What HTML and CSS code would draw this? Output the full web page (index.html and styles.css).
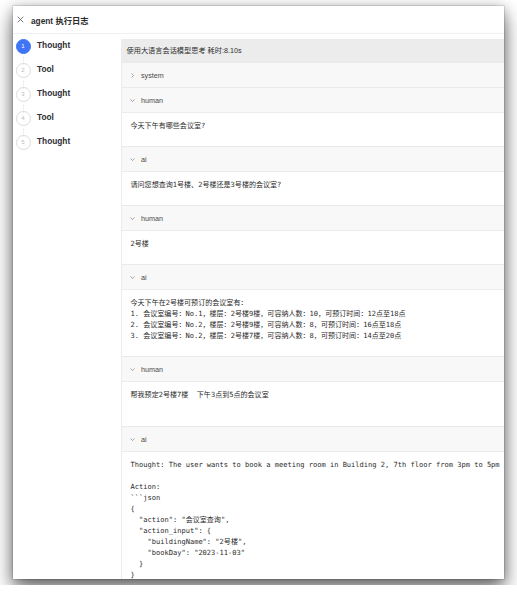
FILE: index.html
```html
<!DOCTYPE html>
<html lang="zh-CN">
<head>
<meta charset="utf-8">
<title>agent 执行日志</title>
<link rel="stylesheet" href="styles.css">
</head>
<body>
<div class="window">
  <header class="topbar">
    <svg class="close" viewBox="0 0 10 10" width="7" height="7"><path d="M1 1L9 9M9 1L1 9" stroke="#555" stroke-width="1.1" fill="none"/></svg>
    <span class="title">agent 执行日志</span>
  </header>
  <div class="main">
    <aside class="steps">
      <div class="step active"><div class="rail"><span class="dot">1</span><span class="line"></span></div><span class="label">Thought</span></div>
      <div class="step"><div class="rail"><span class="dot">2</span><span class="line"></span></div><span class="label">Tool</span></div>
      <div class="step"><div class="rail"><span class="dot">3</span><span class="line"></span></div><span class="label">Thought</span></div>
      <div class="step"><div class="rail"><span class="dot">4</span><span class="line"></span></div><span class="label">Tool</span></div>
      <div class="step last"><div class="rail"><span class="dot">5</span></div><span class="label">Thought</span></div>
    </aside>
    <section class="pane">
      <div class="pane-head">使用大语言会话模型思考 耗时:8.10s</div>
      <div class="msg">
        <div class="msg-head"><svg class="chev" viewBox="0 0 6 6" width="5" height="5"><path d="M1.8 0.6L4.2 3L1.8 5.4" stroke="#777" stroke-width="0.8" fill="none"/></svg><span>system</span></div>
      </div>
      <div class="msg">
        <div class="msg-head"><svg class="chev" viewBox="0 0 6 6" width="5" height="5"><path d="M0.6 1.8L3 4.2L5.4 1.8" stroke="#777" stroke-width="0.8" fill="none"/></svg><span>human</span></div>
        <pre class="msg-body">今天下午有哪些会议室?</pre>
      </div>
      <div class="msg">
        <div class="msg-head"><svg class="chev" viewBox="0 0 6 6" width="5" height="5"><path d="M0.6 1.8L3 4.2L5.4 1.8" stroke="#777" stroke-width="0.8" fill="none"/></svg><span>ai</span></div>
        <pre class="msg-body">请问您想查询1号楼、2号楼还是3号楼的会议室?</pre>
      </div>
      <div class="msg">
        <div class="msg-head"><svg class="chev" viewBox="0 0 6 6" width="5" height="5"><path d="M0.6 1.8L3 4.2L5.4 1.8" stroke="#777" stroke-width="0.8" fill="none"/></svg><span>human</span></div>
        <pre class="msg-body">2号楼</pre>
      </div>
      <div class="msg">
        <div class="msg-head"><svg class="chev" viewBox="0 0 6 6" width="5" height="5"><path d="M0.6 1.8L3 4.2L5.4 1.8" stroke="#777" stroke-width="0.8" fill="none"/></svg><span>ai</span></div>
        <pre class="msg-body">今天下午在2号楼可预订的会议室有：
1. 会议室编号：No.1，楼层：2号楼9楼，可容纳人数：10，可预订时间：12点至18点
2. 会议室编号：No.2，楼层：2号楼9楼，可容纳人数：8，可预订时间：16点至18点
3. 会议室编号：No.2，楼层：2号楼7楼，可容纳人数：8，可预订时间：14点至20点</pre>
      </div>
      <div class="msg">
        <div class="msg-head"><svg class="chev" viewBox="0 0 6 6" width="5" height="5"><path d="M0.6 1.8L3 4.2L5.4 1.8" stroke="#777" stroke-width="0.8" fill="none"/></svg><span>human</span></div>
        <pre class="msg-body">帮我预定2号楼7楼  下午3点到5点的会议室
&nbsp;</pre>
      </div>
      <div class="msg">
        <div class="msg-head"><svg class="chev" viewBox="0 0 6 6" width="5" height="5"><path d="M0.6 1.8L3 4.2L5.4 1.8" stroke="#777" stroke-width="0.8" fill="none"/></svg><span>ai</span></div>
        <pre class="msg-body">Thought: The user wants to book a meeting room in Building 2, 7th floor from 3pm to 5pm

Action:
```json
{
  "action": "会议室查询",
  "action_input": {
    "buildingName": "2号楼",
    "bookDay": "2023-11-03"
  }
}
```
</pre>
      </div>
      <div class="scroll-thumb"></div>
    </section>
  </div>
</div>
</body>
</html>
```
FILE: styles.css
```css
* { box-sizing: border-box; }

html {
  margin: 0;
  background: #ffffff;
}

body {
  margin: 0;
  padding: 6px 13px;
  font-family: "Liberation Sans", "Noto Sans CJK SC", sans-serif;
  color: #333;
}

.window {
  width: 491px;
  height: 573px;
  background: #fff;
  display: flex;
  flex-direction: column;
  overflow: hidden;
  box-shadow: 0 0 0 0.5px rgba(0,0,0,0.2), 0 10px 20px rgba(0,0,0,0.55), 0 2px 10px rgba(0,0,0,0.25);
}

.topbar {
  height: 27px;
  flex: none;
  display: flex;
  align-items: center;
  padding-left: 4px;
  border-bottom: 1px solid #f0f0f0;
}

.close {
  display: block;
  margin-right: 7px;
}

.title {
  font-size: 8.3px;
  font-weight: 600;
  color: #2c2c2c;
}

.main {
  flex: 1;
  display: flex;
  min-height: 0;
}

.steps {
  width: 104px;
  flex: none;
  padding: 4.5px 0 0 3.5px;
}

.step {
  display: flex;
  height: 24px;
}

.rail {
  width: 13px;
  display: flex;
  flex-direction: column;
  align-items: center;
}

.dot {
  width: 13px;
  height: 13px;
  flex: none;
  border-radius: 50%;
  border: 0.8px solid #dcdcdc;
  color: #bdbdbd;
  font-size: 6px;
  display: flex;
  align-items: center;
  justify-content: center;
}

.step.active .dot {
  background: #3f74f6;
  border-color: #3f74f6;
  color: #fff;
}

.line {
  flex: 1;
  width: 1px;
  background: #efefef;
  margin: 2px 0 -2px;
}

.label {
  margin-left: 7.5px;
  height: 13px;
  line-height: 13px;
  font-size: 8.3px;
  font-weight: 700;
  color: #2d2d33;
}

.pane {
  flex: 1;
  min-width: 0;
  position: relative;
  margin-top: 5px;
  overflow: hidden;
  border-left: 1px solid #ececec;
}

.pane-head {
  height: 23px;
  line-height: 23px;
  padding-left: 5px;
  background: #ececec;
  font-size: 7.2px;
  color: #2e2e2e;
  white-space: nowrap;
}

.msg-head {
  height: 24px;
  display: flex;
  align-items: center;
  padding-left: 8.5px;
  background: #f8f8f8;
  border-top: 1px solid #e9e9e9;
  font-size: 7.2px;
  color: #4a4a4a;
}

.chev {
  display: block;
  margin-right: 6px;
}

.msg-body {
  margin: 0;
  padding: 7px 9px 15px;
  border-top: 1px solid #ececec;
  background: #fff;
  font-family: "DejaVu Sans Mono", "Noto Sans CJK SC", monospace;
  font-size: 7.05px;
  line-height: 11px;
  color: #2a2a2a;
  white-space: pre;
}

.scroll-thumb {
  position: absolute;
  left: 10px;
  bottom: 0;
  width: 122px;
  height: 3px;
  border-radius: 2px;
  background: #767676;
}
```
